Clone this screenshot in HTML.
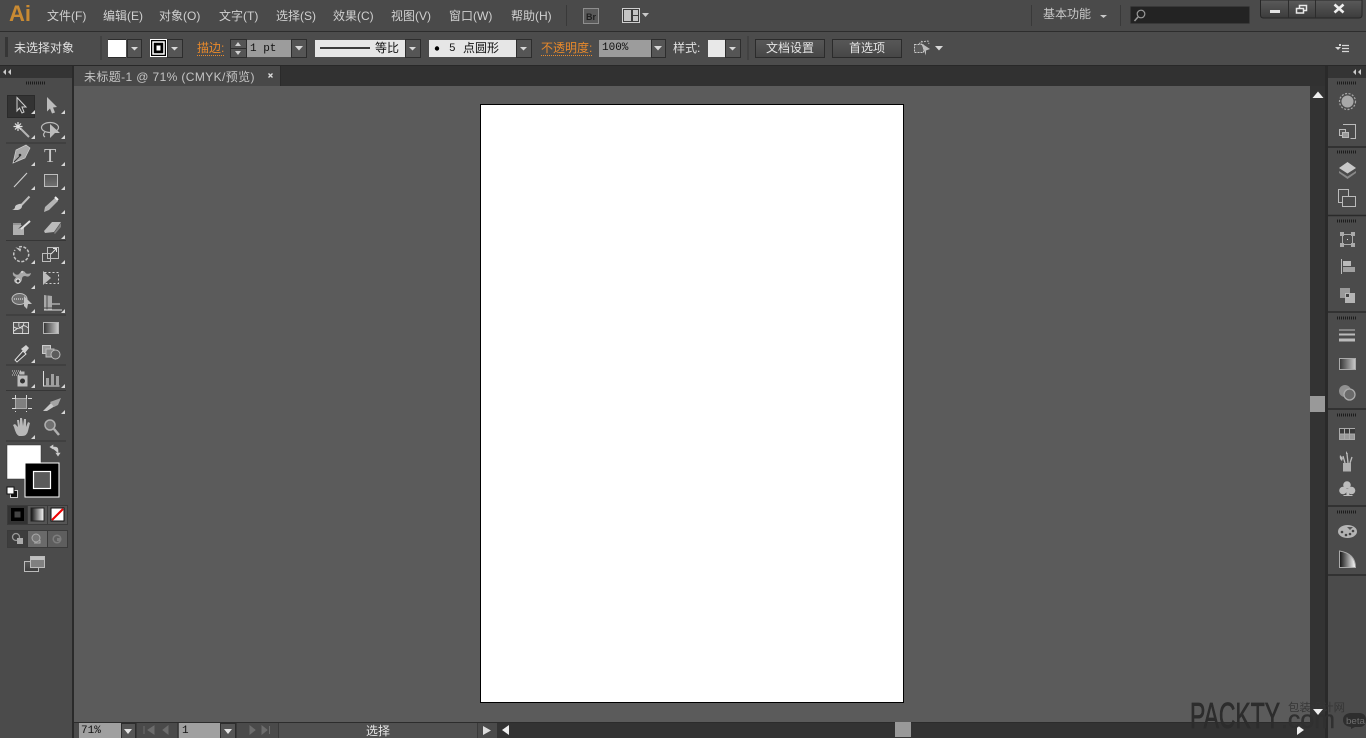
<!DOCTYPE html>
<html><head><meta charset="utf-8">
<style>
html,body{margin:0;padding:0;width:1366px;height:738px;overflow:hidden;background:#4b4b4b}
body{position:relative;font-family:"Liberation Sans","WenQuanYi Zen Hei","Noto Sans CJK SC",sans-serif;font-size:12px}
.a{position:absolute;display:block}
.t{position:absolute;white-space:nowrap;line-height:16px;color:#d0d0d0;font-size:12px}
.o{color:#e8892b;border-bottom:1px dotted #e8892b;line-height:14px}
.m{font-family:"Liberation Mono","WenQuanYi Zen Hei",monospace;color:#111}
.btn{position:absolute;top:39px;width:68px;height:17px;border:1px solid #2b2b2b;background:linear-gradient(#575757,#474747);color:#e4e4e4;text-align:center;line-height:17px;font-size:12px}
svg{position:absolute;left:0;top:0}
</style></head><body>
<div class="a" style="left:0;top:0;width:1366px;height:31px;background:#4a4a4a"></div>
<div class="a" style="left:0;top:31px;width:1366px;height:1px;background:#2d2d2d"></div>
<div class="a" style="left:0;top:32px;width:1366px;height:33px;background:#4c4c4c"></div>
<div class="a" style="left:0;top:65px;width:1366px;height:1px;background:#282828"></div>
<div class="a" style="left:74px;top:66px;width:1252px;height:20px;background:#313131"></div>
<div class="a" style="left:74px;top:66px;width:207px;height:20px;background:#484848;border-right:1px solid #2a2a2a;box-sizing:border-box"></div>
<div class="a" style="left:0;top:66px;width:72px;height:672px;background:#4b4b4b"></div>
<div class="a" style="left:0;top:66px;width:72px;height:12px;background:#343434"></div>
<div class="a" style="left:72px;top:66px;width:2px;height:672px;background:#2a2a2a"></div>
<div class="a" style="left:74px;top:86px;width:1236px;height:636px;background:#5b5b5b"></div>
<div class="a" style="left:480px;top:104px;width:424px;height:599px;background:#fff;border:1px solid #000;box-sizing:border-box"></div>
<div class="a" style="left:1310px;top:86px;width:15px;height:652px;background:#333"></div>
<div class="a" style="left:1325px;top:66px;width:3px;height:672px;background:#2a2a2a"></div>
<div class="a" style="left:1328px;top:66px;width:38px;height:672px;background:#4b4b4b"></div>
<div class="a" style="left:1328px;top:66px;width:38px;height:12px;background:#343434"></div>
<div class="a" style="left:1310px;top:396px;width:15px;height:16px;background:#999"></div>
<div class="a" style="left:74px;top:722px;width:1236px;height:16px;background:#4a4a4a;border-top:1px solid #2c2c2c;box-sizing:border-box"></div>
<div class="a" style="left:497px;top:723px;width:813px;height:15px;background:#333"></div>
<div class="a" style="left:895px;top:722px;width:16px;height:15px;background:#999"></div>
<div class="a" style="left:79px;top:723px;width:42px;height:15px;background:#a0a0a0"></div>
<div class="a" style="left:179px;top:723px;width:41px;height:15px;background:#a0a0a0"></div>
<div class="a" style="left:278px;top:723px;width:200px;height:15px;background:#505050;border-left:1px solid #3a3a3a;border-right:1px solid #3a3a3a;box-sizing:border-box"></div>

<span class="t" style="left:47px;top:8px">文件(F)</span>
<span class="t" style="left:103px;top:8px">编辑(E)</span>
<span class="t" style="left:159px;top:8px">对象(O)</span>
<span class="t" style="left:219px;top:8px">文字(T)</span>
<span class="t" style="left:276px;top:8px">选择(S)</span>
<span class="t" style="left:333px;top:8px">效果(C)</span>
<span class="t" style="left:391px;top:8px">视图(V)</span>
<span class="t" style="left:449px;top:8px">窗口(W)</span>
<span class="t" style="left:511px;top:8px">帮助(H)</span>
<span class="t" style="left:1043px;top:6px;color:#c8c8c8">基本功能</span>
<span class="t" style="left:9px;top:1px;font-size:22px;line-height:26px;font-weight:bold;color:#c98a32">Ai</span>

<span class="t" style="left:14px;top:40px;color:#e0e0e0">未选择对象</span>
<span class="a" style="left:108px;top:39px;width:18px;height:18px;background:#fff"></span>
<span class="t o" style="left:197px;top:41px">描边:</span>
<span class="a" style="left:246px;top:40px;width:45px;height:17px;background:#9c9c9c"></span>
<span class="t m" style="left:250px;top:41px;font-size:11px">1 pt</span>
<span class="a" style="left:315px;top:40px;width:90px;height:17px;background:#e6e6e6"></span>
<span class="t" style="left:375px;top:40px;color:#111">等比</span>
<span class="a" style="left:429px;top:40px;width:87px;height:17px;background:#e6e6e6"></span>
<span class="t m" style="left:449px;top:41px;font-size:11px">5</span>
<span class="t" style="left:463px;top:40px;color:#111">点圆形</span>
<span class="t o" style="left:541px;top:41px">不透明度:</span>
<span class="a" style="left:599px;top:40px;width:52px;height:17px;background:#9c9c9c"></span>
<span class="t m" style="left:602px;top:40px;font-size:11px">100%</span>
<span class="t" style="left:673px;top:40px;color:#e0e0e0">样式:</span>
<span class="a" style="left:708px;top:40px;width:17px;height:17px;background:#e8e8e8"></span>
<div class="btn" style="left:755px">文档设置</div>
<div class="btn" style="left:832px">首选项</div>

<span class="t" style="left:84px;top:69px;color:#c4c4c4;letter-spacing:.38px">未标题-1 @ 71% (CMYK/预览)</span>
<span class="t m" style="left:81px;top:724px;font-size:11px;line-height:15px">71%</span>
<span class="t m" style="left:182px;top:724px;font-size:11px;line-height:15px">1</span>
<span class="t" style="left:366px;top:723px;color:#e6e6e6">选择</span>

<svg width="1366" height="738" viewBox="0 0 1366 738" fill="none">
<defs>
<linearGradient id="g1" x1="0" x2="1" y1="0" y2="0"><stop offset="0" stop-color="#333"/><stop offset="1" stop-color="#ccc"/></linearGradient>
<linearGradient id="g2" x1="0" x2="1" y1="0" y2="0"><stop offset="0" stop-color="#111"/><stop offset="1" stop-color="#fff"/></linearGradient>
<linearGradient id="g3" x1="0" x2="0" y1="0" y2="1"><stop offset="0" stop-color="#5a5a5a"/><stop offset="1" stop-color="#3c3c3c"/></linearGradient>
<linearGradient id="g4" x1="0" x2="0" y1="0" y2="1"><stop offset="0" stop-color="#555"/><stop offset="1" stop-color="#707070"/></linearGradient>
</defs>

<!-- title bar -->
<path d="M566.5 5V26M1031.5 5V26M1120.5 5V26" stroke="#393939"/>
<path d="M1100 15h7l-3.500 3z" fill="#c8c8c8"/>
<rect x="583.500" y="8.500" width="15" height="15" fill="#5a5a5a" stroke="#8e8e8e"/>
<text x="586" y="20" font-size="9" font-weight="bold" fill="#1f1f1f" font-family="Liberation Sans">Br</text>
<rect x="622.500" y="8.500" width="17" height="14" fill="#3c3c3c" stroke="#cfcfcf"/>
<path d="M624 10h7v11h-7zM633 10h5v5h-5zM633 16h5v5h-5z" fill="#c4c4c4"/>
<path d="M642 13h7l-3.500 4z" fill="#c8c8c8"/>
<rect x="1130.500" y="6.500" width="119" height="17" rx="1" fill="#232323" stroke="#383838"/>
<circle cx="1141" cy="14" r="3.800" stroke="#9a9a9a" stroke-width="1.200"/><path d="M1138 17l-3.500 4" stroke="#9a9a9a" stroke-width="1.500"/>
<path d="M1260.500 0V15q0 3 3 3H1359q3 0 3-3V0z" fill="url(#g3)" stroke="#262626"/>
<path d="M1288.500 0V18M1315.500 0V18" stroke="#2c2c2c"/>
<path d="M1270 10h10v3h-10z" fill="#e4e4e4"/>
<path d="M1296.500 8.500h7v4.500h-7zM1299.500 8V5.500h7v5h-3" stroke="#e8e8e8" stroke-width="1.500"/>
<path d="M1334.500 4.500l9 8M1343.500 4.500l-9 8" stroke="#eee" stroke-width="2.600"/>

<!-- control bar -->
<path d="M5 38h3M5 40h3M5 42h3M5 44h3M5 46h3M5 48h3M5 50h3M5 52h3M5 54h3M5 56h3" stroke="#1f1f1f"/>
<path d="M101 36V60M748 36V60" stroke="#393939" stroke-width="1"/>
<g stroke="#2d2d2d" fill="#555">
<rect x="127.500" y="39.500" width="14" height="18"/>
<rect x="167.500" y="39.500" width="15" height="18"/>
<rect x="230.500" y="39.500" width="16" height="18"/>
<rect x="291.500" y="39.500" width="15" height="18"/>
<rect x="405.500" y="39.500" width="15" height="18"/>
<rect x="516.500" y="39.500" width="15" height="18"/>
<rect x="651.500" y="39.500" width="14" height="18"/>
<rect x="725.500" y="39.500" width="15" height="18"/>
</g>
<path d="M108 39.500H126M108 57.500H126" stroke="#2d2d2d"/>
<path d="M131 47h7l-3.500 3.500zM171 47h7l-3.500 3.500zM295 46h8l-4 4.500zM409 47h7l-3.500 3.500zM520 47h7l-3.500 3.500zM654 46h8l-4 4.500zM729 47h7l-3.500 3.500z" fill="#d8d8d8"/>
<path d="M230 48.500h16" stroke="#2d2d2d"/>
<path d="M235 46h6l-3-4zM235 51h6l-3 4z" fill="#d0d0d0"/>
<rect x="150.500" y="39.500" width="16" height="17" fill="#000" stroke="#fff"/>
<rect x="153" y="42" width="11" height="12" fill="#000" stroke="#fff" stroke-width="1.500"/>
<rect x="156" y="45" width="5" height="6" fill="#fff" stroke="#000"/>
<path d="M320 48h50" stroke="#000" stroke-width="1.600"/>
<circle cx="437" cy="48.500" r="2.200" fill="#000"/>
<!-- align icon -->
<rect x="914.500" y="44.500" width="9" height="8" fill="#5a5a5a" stroke="#c8c8c8" stroke-dasharray="2 1"/>
<path d="M921 42l7-1 1 3M919 44l3-3" stroke="#bbb" stroke-dasharray="2 1"/>
<path d="M921 43l9 6-4 1.500 0 5z" fill="#bcbcbc"/>
<path d="M935 46h8l-4 4.500z" fill="#d8d8d8"/>
<!-- panel menu -->
<path d="M1335 47h6l-3 3z" fill="#d8d8d8"/>
<path d="M1342 45.500h7M1342 48.500h7M1342 51.500h7" stroke="#d8d8d8" stroke-width="1.200"/><path d="M1339 44h2v2h-2z" fill="#d8d8d8"/>

<!-- tab -->
<path d="M268.500 73.500l4 4M272.500 73.500l-4 4" stroke="#ddd" stroke-width="1.300"/>
<!-- collapse arrows -->
<path d="M6 69v6l-3-3zM11 69v6l-3-3zM1356 69v6l-3-3zM1361 69v6l-3-3z" fill="#ccc"/>
<!-- grips -->
<g stroke="#1c1c1c" stroke-width="3" stroke-dasharray="1 1">
<path d="M26 83h19M1337 83h19M1337 152h19M1337 221h19M1337 318h19M1337 415h19M1337 512h19"/>
</g>

<!-- tools -->
<rect x="7.500" y="95.500" width="27" height="22" fill="#333" stroke="#2a2a2a"/>
<path d="M17 97.500l9 9.500h-4l2 5-2 1-2.500-5-2.500 3z" fill="#3a3a3a" stroke="#d0d0d0"/>
<path d="M47 97l10 10-4 .5 2 5-3 1-2-5-3 3z" fill="#bcbcbc"/>
<!-- separators -->
<path d="M6 143h60M6 240.500h60M6 315h60M6 365h60M6 390.500h60M6 441h60" stroke="#363636"/>
<!-- corner triangles -->
<path d="M35 114v-4l-4 4zM65 114v-4l-4 4zM35 139v-4l-4 4zM65 139v-4l-4 4zM35 166v-4l-4 4zM65 166v-4l-4 4zM35 190v-4l-4 4zM65 190v-4l-4 4zM65 214v-4l-4 4zM65 239v-4l-4 4zM35 264v-4l-4 4zM65 264v-4l-4 4zM35 289v-4l-4 4zM35 313v-4l-4 4zM65 313v-4l-4 4zM35 363v-4l-4 4zM35 388v-4l-4 4zM65 388v-4l-4 4zM65 414v-4l-4 4zM35 439v-4l-4 4z" fill="#d6d6d6"/>
<!-- wand -->
<path d="M20 128l9 9" stroke="#b4b4b4" stroke-width="2"/>
<path d="M18 122v9M13.500 126.500h9M15 123.500l6 6M21 123.500l-6 6" stroke="#e0e0e0" stroke-width="1.200"/>
<!-- lasso -->
<ellipse cx="50" cy="127.500" rx="8.500" ry="5" stroke="#bcbcbc" stroke-width="1.200"/>
<path d="M45 132q-3 3 0 5" stroke="#bcbcbc" stroke-width="1.200"/>
<path d="M50 124l10 9h-5l-5 5z" fill="#bcbcbc"/>
<!-- pen -->
<path d="M30 148l-4-3-10 5-3 13 12-5z" fill="#a8a8a8" stroke="#d0d0d0" stroke-width=".7"/><path d="M14 162l6-6" stroke="#333"/><circle cx="20" cy="155" r="1.300" fill="#333"/>
<!-- type -->
<text x="44" y="162" font-family="Liberation Serif" font-size="20" fill="#c8c8c8">T</text>
<!-- line -->
<path d="M14 187l13-14" stroke="#cfcfcf" stroke-width="1.100"/>
<!-- rect -->
<rect x="44.500" y="174.500" width="13" height="12" fill="url(#g4)" stroke="#bdbdbd"/>
<!-- brush -->
<path d="M29.500 196.500l-9 9.500" stroke="#bdbdbd" stroke-width="2"/><path d="M19 204q3-1 3 2t-4 4h-6q3-1 3-3t4-3z" fill="#c8c8c8"/>
<!-- pencil -->
<path d="M55 198l3 3-9 9-5 2 1-5z" fill="#b4b4b4"/><path d="M55 197l3 3" stroke="#eee" stroke-width="2"/>
<!-- blob -->
<path d="M13 225h9l-4 4 6-3v9H13z" fill="#b0b0b0"/><path d="M21 229l9-8" stroke="#e0e0e0" stroke-width="2"/><path d="M13 224h8" stroke="#ddd"/>
<!-- eraser -->
<path d="M44 231l8-9h9l-7 10-9 1z" fill="#bcbcbc"/><path d="M54 233l7-10v4l-6 7z" fill="#808080"/>
<!-- rotate -->
<path d="M19 247a7.500 7.500 0 1 1-4 3" stroke="#c4c4c4" stroke-width="1.500" stroke-dasharray="3 1.500"/><path d="M15 248h6v3z" fill="#c4c4c4" transform="rotate(15 18 249)"/>
<!-- scale -->
<rect x="47.500" y="247.500" width="11" height="11" stroke="#bdbdbd"/><rect x="42.500" y="253.500" width="8" height="8" stroke="#bdbdbd"/><path d="M51 254l5-5M53 248.500h3.500v3.500" stroke="#e0e0e0"/>
<!-- warp -->
<path d="M13 272q4 5 7 1 2-4 5-1 1 3 6 1-1 5-6 3-3 0-3 3t-4 5q-4-1-4-4l2-3q-4-1-3-5z" fill="#a8a8a8"/><circle cx="18" cy="281" r="2" stroke="#eee" fill="#444"/><path d="M22 273v-2" stroke="#eee"/>
<!-- free transform -->
<rect x="44.500" y="272.500" width="14" height="11" stroke="#d0d0d0" stroke-dasharray="2 2"/><path d="M43 271l8 7-8 7z" fill="#bcbcbc"/>
<!-- shape builder -->
<ellipse cx="19.500" cy="299" rx="7.500" ry="5.500" fill="#6e6e6e" stroke="#c0c0c0"/><path d="M14 299h10" stroke="#eee" stroke-dasharray="1 1"/><path d="M24 296l8 8h-4l-1 5-3-3z" fill="#c0c0c0"/>
<!-- perspective -->
<path d="M44 295l8 1 0 14h-8z" fill="#a8a8a8"/><path d="M47 295v15M52 299h4v11M57 303h3v7M44 308h18" stroke="#4b4b4b"/><path d="M44 310h18M52 304h8" stroke="#ddd"/>
<!-- mesh -->
<rect x="13.500" y="322.500" width="15" height="11" fill="#5a5a5a" stroke="#d4d4d4"/><path d="M14 327q4 3 7 0t7 1M19 323q-1 5 2 5t1 6M24 323q-1 3-2 5M14 331l4-3" stroke="#e4e4e4" stroke-width=".8"/>
<!-- gradient -->
<rect x="43.500" y="322.500" width="15" height="11" fill="url(#g1)" stroke="#b4b4b4"/>
<!-- eyedropper -->
<path d="M15 360l8-9 3 3-9 8z" fill="#444" stroke="#e0e0e0"/><path d="M21 349l5-4 3 3-4 5z" fill="#d0d0d0"/>
<!-- blend -->
<rect x="42.500" y="345.500" width="8" height="8" fill="#999" stroke="#ccc"/><rect x="46" y="349" width="8" height="8" fill="#858585" stroke="#bbb"/><circle cx="55.500" cy="354.500" r="4.500" fill="#5c5c5c" stroke="#bbb"/>
<!-- spray -->
<path d="M12 371h9M13 373h8M12 375h7" stroke="#ccc" stroke-dasharray="1 1"/><rect x="19.500" y="371.500" width="5" height="3" fill="#bbb"/><rect x="17.500" y="375.500" width="10" height="11" fill="#bcbcbc"/><circle cx="22.500" cy="381" r="2.500" fill="#333"/>
<!-- graph -->
<path d="M43.500 371v15h16" stroke="#ddd"/><path d="M46 378h3v8h-3zM51 374h3v12h-3zM56 376h3v10h-3z" fill="#a0a0a0"/>
<!-- artboard -->
<rect x="15.500" y="398.500" width="11" height="10" fill="#808080" stroke="#aaa"/><path d="M12 398.500h20M12 408.500h20M15.500 395v17M26.500 395v17" stroke="#d8d8d8" stroke-dasharray="4 12"/>
<!-- slice -->
<path d="M43 411l8-8 4 3-8 5z" fill="#c8c8c8"/><path d="M50 402l11-4-3 7-4 2z" fill="#a4a4a4"/>
<!-- hand -->
<path d="M14 427l-1-2 2-1 3 3-1-7h2l1 6 0-8h2l1 8 1-7h2l0 8 2-5 2 1-2 8q-1 5-6 5h-3q-3-1-5-9z" fill="#b8b8b8"/>
<!-- zoom -->
<circle cx="50" cy="425" r="5" fill="#707070" stroke="#b0b0b0" stroke-width="1.500"/><path d="M54 429l5 6" stroke="#b0b0b0" stroke-width="2.500"/>

<!-- fill/stroke -->
<rect x="7" y="445" width="34" height="34" fill="#fff" stroke="#333" stroke-width=".5"/>
<rect x="25" y="463" width="34" height="34" fill="#000" stroke="#fff"/>
<rect x="33.500" y="471.500" width="17" height="17" fill="#5b5b5b" stroke="#fff" stroke-width="1.200"/>
<path d="M51 447h4q3 0 3 3v3M50 447l3-2v4zM58 456l-2-3h4z" stroke="#ccc" fill="#ccc" stroke-width=".6"/>
<rect x="10.500" y="490.500" width="7" height="7" fill="#111" stroke="#ccc"/><rect x="7" y="487" width="7" height="7" fill="#fff" stroke="#111"/>

<rect x="7.500" y="505.500" width="60" height="19" fill="#555" stroke="#3a3a3a"/>
<rect x="8" y="506" width="20" height="18" fill="#333"/>
<path d="M27.500 506v18M47.500 506v18" stroke="#3a3a3a"/>
<rect x="11" y="508" width="13" height="13" fill="#000"/><rect x="14.500" y="511.500" width="6" height="6" fill="#444"/>
<rect x="31" y="508" width="13" height="13" fill="url(#g2)" stroke="#222"/>
<rect x="51" y="508" width="13" height="13" fill="#fff" stroke="#111"/><path d="M52 520l11-11" stroke="#e00" stroke-width="2"/>

<rect x="7.500" y="530.500" width="60" height="17" fill="#5e5e5e" stroke="#3a3a3a"/>
<rect x="8" y="531" width="20" height="16" fill="#3d3d3d"/>
<rect x="28" y="531" width="20" height="16" fill="#6a6a6a"/>
<path d="M27.500 531v16M47.500 531v16" stroke="#3a3a3a"/>
<circle cx="16" cy="537" r="3.500" stroke="#999" stroke-width="1.300"/><rect x="17" y="538" width="6" height="6" fill="#aaa"/>
<circle cx="36" cy="538" r="4" fill="#777" stroke="#aaa"/><path d="M40 540v3h-6" stroke="#aaa"/>
<circle cx="57" cy="539" r="3.800" stroke="#7d7d7d" stroke-width="1.500"/><rect x="57" y="538" width="3" height="3" fill="#7d7d7d"/>

<rect x="24.500" y="561.500" width="14" height="10" fill="url(#g3)" stroke="#bbb"/>
<rect x="30.500" y="556.500" width="14" height="11" fill="#808080" stroke="#bbb"/><path d="M31 557h13v3H31z" fill="#c0c0c0"/>

<!-- right panel seps -->
<path d="M1328 147h38M1328 215.500h38M1328 312h38M1328 409h38M1328 506h38M1328 575h38" stroke="#2a2a2a" stroke-width="1.500"/>
<!-- color -->
<circle cx="1347.500" cy="101.500" r="8" stroke="#a8a8a8" stroke-dasharray="2 1.500" stroke-width="1.200"/><circle cx="1347.500" cy="101.500" r="6" fill="#a8a8a8"/>
<!-- color guide -->
<path d="M1343 124.500h12.500v14h-5" stroke="#bbb"/><rect x="1339.500" y="129.500" width="6" height="6" fill="#555" stroke="#bbb"/><rect x="1342.500" y="132.500" width="6" height="5" fill="#999" stroke="#bbb"/>
<!-- layers -->
<path d="M1347.500 162l8.500 6-8.500 5.500-8.500-5.500z" fill="#c8c8c8"/><path d="M1339 171l8.500 5.500 8.500-5.500 0 2-8.500 6-8.500-6z" fill="#888"/>
<!-- artboards -->
<rect x="1338.500" y="189.500" width="10" height="13" stroke="#bbb"/><rect x="1342.500" y="196.500" width="13" height="10" fill="#4b4b4b" stroke="#bbb"/>
<!-- transform -->
<rect x="1342.500" y="234.500" width="10" height="10" stroke="#aaa"/><path d="M1340 232h4v4h-4zM1351 232h4v4h-4zM1340 243h4v4h-4zM1351 243h4v4h-4z" fill="#aaa"/><path d="M1347 239h1v1h-1z" fill="#ddd"/>
<!-- align -->
<path d="M1341.500 259v15" stroke="#bbb"/><rect x="1343" y="261" width="8" height="5" fill="#bbb"/><rect x="1343" y="267" width="12" height="5" fill="#a0a0a0"/>
<!-- pathfinder -->
<rect x="1340" y="288" width="10" height="10" fill="#999"/><rect x="1345" y="293" width="10" height="10" fill="#b4b4b4"/><rect x="1345.500" y="293.500" width="4" height="4" fill="#444" stroke="#bbb"/>
<!-- stroke -->
<path d="M1339 330h16" stroke="#bbb"/><path d="M1339 334.500h16" stroke="#bbb" stroke-width="2"/><path d="M1339 340h16" stroke="#bbb" stroke-width="3"/>
<!-- gradient -->
<rect x="1339.500" y="358.500" width="16" height="11" fill="url(#g1)" stroke="#aaa"/>
<!-- transparency -->
<circle cx="1345" cy="391" r="6" fill="#909090"/><circle cx="1349.500" cy="394.500" r="5.500" fill="#6a6a6a" stroke="#aaa" stroke-width="1.300"/>
<!-- swatches -->
<rect x="1339.500" y="428.500" width="15" height="11" fill="#999" stroke="#aaa"/><path d="M1340 429h15v5h-15z" fill="#3a3a3a"/><path d="M1344.500 429v11M1349.500 429v11M1340 434h15" stroke="#aaa"/>
<!-- brushes -->
<rect x="1343" y="463" width="8" height="8.500" fill="#b0b0b0"/><path d="M1345 463l-2-7M1348 463l-1-9M1350 463l2-6" stroke="#bbb" stroke-width="1.300"/><path d="M1340 455l3 3-1 3q-3-2-2-6zM1346 451l2 3-2 0z" fill="#bbb"/>
<!-- symbols -->
<circle cx="1347" cy="485" r="3.800" fill="#bcbcbc"/><circle cx="1343" cy="490.500" r="3.800" fill="#bcbcbc"/><circle cx="1351.500" cy="490.500" r="3.800" fill="#bcbcbc"/><path d="M1346 489h2l1.500 6h3v1h-9v-1h3z" fill="#bcbcbc"/>
<!-- palette -->
<ellipse cx="1347.500" cy="531.500" rx="9.500" ry="6.500" fill="#b4b4b4"/><circle cx="1342" cy="532" r="1.300" fill="#444"/><circle cx="1346" cy="535" r="1.300" fill="#444"/><circle cx="1350" cy="534" r="1.300" fill="#444"/><circle cx="1353" cy="531" r="1.300" fill="#444"/><path d="M1347 527h6l-3 3z" fill="#555"/>
<!-- wheel -->
<path d="M1339.500 551v16.500h16q0-14-16-16.500z" fill="url(#g2)" stroke="#aaa"/>

<!-- scroll arrows -->
<path d="M1312.500 98h11l-5.500-6.500z" fill="#eee"/>
<path d="M502 730l7-5v10z" fill="#eee"/>
<path d="M1297 725l7 5-7 5z" fill="#eee"/>
<path d="M483 726l8 4.500-8 4.500z" fill="#dcdcdc"/>
<!-- status dropdowns -->
<rect x="121.500" y="723.500" width="14" height="15" fill="#555" stroke="#2d2d2d"/>
<rect x="220.500" y="723.500" width="15" height="15" fill="#555" stroke="#2d2d2d"/>
<path d="M124 729h8l-4 5zM224 729h8l-4 5z" fill="#e4e4e4"/>
<path d="M144 726v8M154 726l-6 4 6 4zM168 726l-5 4 5 4zM250 726l5 4-5 4zM262 726l5 4-5 4zM269.500 726v8" fill="#6c6c6c" stroke="#6c6c6c"/>
<path d="M136.500 723v15M177.500 723v15M236.500 723v15" stroke="#3a3a3a"/>

<!-- watermark -->
<text x="1190" y="728" font-family="Liberation Sans" font-size="36" fill="#2c2c2c" stroke="#2c2c2c" stroke-width=".7" textLength="90" lengthAdjust="spacingAndGlyphs">PACKTY</text>
<text x="1281" y="728" font-family="Liberation Sans" font-size="25" fill="#303030" stroke="#303030" stroke-width=".4" textLength="54" lengthAdjust="spacingAndGlyphs">.com</text>
<text x="1288" y="711" font-family="WenQuanYi Zen Hei,Noto Sans CJK SC,sans-serif" font-size="11" fill="#363636" textLength="57" lengthAdjust="spacingAndGlyphs">包装设计网</text>
<path d="M1313 709h10l-5 6z" fill="#eee"/>
<path d="M1350 713h9q7 0 7 7t-7 7h-4l-4 2 0-2q-8-1-8-7t7-7z" fill="#2e2e2e"/>
<text x="1346" y="724" font-family="Liberation Sans" font-size="9" fill="#6e6e6e" textLength="19" lengthAdjust="spacingAndGlyphs">beta</text>
</svg>
</body></html>
